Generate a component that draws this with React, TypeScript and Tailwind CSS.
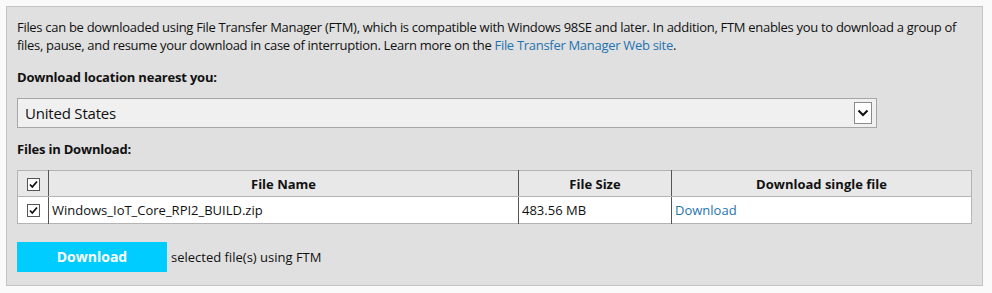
import React from 'react';

const font = { fontFamily: '"Segoe UI", "Open Sans", "Liberation Sans", sans-serif' };

function Check() {
  return (
    <span className="inline-flex h-[13px] w-[13px] items-center justify-center border border-[#555] bg-white">
      <svg width="11" height="11" viewBox="0 0 11 11">
        <path d="M2 5.5 L4.3 8 L9 2.5" fill="none" stroke="#111" strokeWidth="1.8" />
      </svg>
    </span>
  );
}

export default function App() {
  return (
    <div className="min-h-[293px] bg-[#fafafa] pt-[6px] pl-[6px] pr-[9px] text-[#111]" style={font}>
      <div className="border border-[#c4c4c4] bg-[#e0e0e0] px-[10px] pt-[11px] pb-[13px] text-[13px] leading-[18px]">
        <p className="tracking-[-0.3px]">
          Files can be downloaded using File Transfer Manager (FTM), which is compatible with Windows 98SE and later. In addition, FTM enables you to download a group of files, pause, and resume your download in case of interruption. Learn more on the <a className="text-[#1f74b0]">File Transfer Manager Web site</a>.
        </p>

        <div className="mt-[14px] font-bold tracking-[-0.2px]">Download location nearest you:</div>

        <div className="mt-[12px] flex h-[30px] w-[860px] items-center justify-between border border-[#a6a6a6] bg-[#f0f0f0] pl-[7px] pr-[4px]">
          <span className="text-[15px] tracking-[-0.2px]">United States</span>
          <span className="flex h-[22px] w-[18px] items-center justify-center border border-[#8a8a8a] bg-white">
            <svg width="12" height="8" viewBox="0 0 12 8">
              <path d="M1.5 1.5 L6 6 L10.5 1.5" fill="none" stroke="#111" strokeWidth="2" />
            </svg>
          </span>
        </div>

        <div className="mt-[12px] font-bold tracking-[-0.2px]">Files in Download:</div>

        <table className="mt-[12px] w-[955px] border-collapse border border-[#b4b4b4]">
          <thead>
            <tr className="h-[26px] bg-[#e8e8e8]">
              <th className="w-[31px] border-b border-[#b4b4b4] text-center align-middle">
                <div className="flex justify-center pt-[2px]"><Check /></div>
              </th>
              <th className="w-[470px] border-l border-b border-l-[#555] border-b-[#b4b4b4] text-center font-bold">File Name</th>
              <th className="w-[153px] border-l border-b border-l-[#555] border-b-[#b4b4b4] text-center font-bold">File Size</th>
              <th className="border-l border-b border-l-[#555] border-b-[#b4b4b4] text-center font-bold">Download single file</th>
            </tr>
          </thead>
          <tbody>
            <tr className="h-[27px] bg-white">
              <td className="text-center">
                <div className="flex justify-center pt-[1px]"><Check /></div>
              </td>
              <td className="border-l border-[#555] pl-[3px]">Windows_IoT_Core_RPI2_BUILD.zip</td>
              <td className="border-l border-[#555] pl-[3px]">483.56 MB</td>
              <td className="border-l border-[#555] pl-[3px]">
                <a className="text-[#1f74b0]">Download</a>
              </td>
            </tr>
          </tbody>
        </table>

        <div className="mt-[18px] flex items-center">
          <button className="h-[30px] w-[150px] bg-[#00ccff] text-[14px] font-bold text-white">Download</button>
          <span className="ml-[4px]">selected file(s) using FTM</span>
        </div>
      </div>
    </div>
  );
}
